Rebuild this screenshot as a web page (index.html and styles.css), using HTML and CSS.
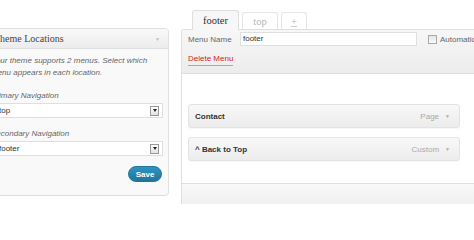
FILE: index.html
```html
<!DOCTYPE html>
<html lang="en">
<head>
<meta charset="utf-8">
<title>Menus</title>
<link rel="stylesheet" href="styles.css">
</head>
<body>
<div class="page">
  <aside class="sidebar">
    <div class="box-head">
      <h3>Theme Locations</h3>
      <span class="toggle">&#9660;</span>
    </div>
    <div class="box-body">
      <p class="desc">Your theme supports 2 menus. Select which menu appears in each location.</p>
      <label class="loc-label">Primary Navigation</label>
      <div class="select"><span>top</span><span class="sel-arrow"><i></i></span></div>
      <label class="loc-label">Secondary Navigation</label>
      <div class="select"><span>footer</span><span class="sel-arrow"><i></i></span></div>
      <div class="actions"><button class="button-primary">Save</button></div>
    </div>
  </aside>

  <main class="main">
    <div class="tabs">
      <span class="tab active">footer</span>
      <span class="tab inactive tab-top">top</span>
      <span class="tab inactive tab-add"><u>+</u></span>
    </div>
    <div class="menu-panel">
      <div class="panel-head">
        <div class="name-row">
          <span class="name-label">Menu Name</span>
          <span class="name-input">footer</span>
          <span class="checkbox"></span>
          <span class="auto-label">Automatically add new top-level pages</span>
        </div>
        <a class="delete-link">Delete Menu</a>
      </div>
      <div class="panel-body">
        <div class="item">
          <span class="item-title">Contact</span>
          <span class="item-type">Page</span>
          <span class="item-arrow">&#9660;</span>
        </div>
        <div class="item">
          <span class="item-title">^ Back to Top</span>
          <span class="item-type">Custom</span>
          <span class="item-arrow">&#9660;</span>
        </div>
      </div>
      <div class="panel-foot"></div>
    </div>
  </main>
</div>
</body>
</html>
```

FILE: styles.css
```css
* { box-sizing: border-box; }
html, body { margin: 0; padding: 0; }
body {
  width: 474px;
  height: 204px;
  overflow: hidden;
  background: #fff;
  font-family: "Liberation Sans", Arial, sans-serif;
  font-size: 8px;
  color: #333;
}
.page { display: flex; align-items: flex-start; }

/* Sidebar box */
.sidebar {
  flex: none;
  width: 189px;
  height: 168px;
  margin-left: -20px;
  margin-top: 28px;
  border: 1px solid #dfdfdf;
  border-radius: 4px;
  background: #f9f9f9;
}
.box-head {
  height: 20px;
  display: flex;
  align-items: center;
  justify-content: space-between;
  padding: 0 8px 0 13px;
  border-bottom: 1px solid #dfdfdf;
  border-radius: 3px 3px 0 0;
  background: linear-gradient(#f9f9f9, #ececec);
}
.box-head h3 {
  margin: 0;
  font-family: "Liberation Serif", "Times New Roman", serif;
  font-weight: normal;
  font-size: 10px;
  color: #464646;
}
.toggle { font-size: 5px; color: #bbb; }
.box-body { padding: 6px 5px 0 10px; }
.desc {
  margin: 0;
  font-style: italic;
  line-height: 12px;
  color: #666;
}
.loc-label {
  display: block;
  margin: 11px 0 1px;
  line-height: 12px;
  font-style: italic;
  color: #666;
}
.select + .loc-label { margin-top: 10px; }
.select {
  height: 15px;
  display: flex;
  align-items: center;
  justify-content: space-between;
  padding-left: 7px;
  border: 1px solid #dfdfdf;
  background: #fff;
  color: #333;
}
.sel-arrow {
  width: 9px;
  height: 10px;
  margin-right: 3px;
  border: 1px solid #999;
  background: linear-gradient(#fff, #e3e3e3);
  display: flex;
  align-items: center;
  justify-content: center;
}
.sel-arrow i {
  width: 0;
  height: 0;
  border-left: 2px solid transparent;
  border-right: 2px solid transparent;
  border-top: 3px solid #222;
}
.actions { display: flex; justify-content: flex-end; margin-top: 10px; padding-right: 1px; }
.button-primary {
  width: 34px;
  height: 16px;
  padding: 0;
  border: 1px solid #21759b;
  border-radius: 8px;
  background: linear-gradient(#2e93c4, #21759b);
  color: #fff;
  font-family: "Liberation Sans", Arial, sans-serif;
  font-weight: bold;
  font-size: 8px;
}

/* Main column */
.main { flex: none; width: 330px; margin-left: 12px; margin-top: 10px; }
.tabs {
  display: flex;
  align-items: flex-end;
  gap: 3px;
  padding-left: 11px;
  height: 20px;
  margin-bottom: -1px;
  position: relative;
  z-index: 1;
}
.tab {
  display: flex;
  align-items: center;
  justify-content: center;
  font-family: "Liberation Serif", "Times New Roman", serif;
  font-size: 10.5px;
  border: 1px solid #dfdfdf;
  border-bottom: none;
  border-radius: 3px 3px 0 0;
}
.tab.active { width: 47px; height: 20px; background: #f7f7f7; color: #333; }
.tab.inactive {
  height: 17px;
  margin-bottom: 1px;
  background: #fff;
  color: #b5b5b5;
  border-color: #e6e6e6;
}
.tab-top { width: 36px; }
.tab-add { width: 26px; }
.tab-add u { text-decoration-color: #ccc; }

.menu-panel {
  width: 330px;
  border: 1px solid #dfdfdf;
  border-right: none;
  border-radius: 3px 0 0 0;
}
.panel-head {
  height: 44px;
  padding: 2px 0 0 6px;
  border-bottom: 1px solid #dfdfdf;
  background: linear-gradient(#f7f7f7, #ececec);
  overflow: hidden;
}
.name-row { display: flex; align-items: center; height: 14px; white-space: nowrap; }
.name-row > span { flex: none; }
.name-label { width: 52px; color: #666; }
.name-input {
  width: 177px;
  height: 14px;
  line-height: 12px;
  padding-left: 2px;
  border: 1px solid #dfdfdf;
  background: #fff;
  color: #333;
}
.checkbox {
  width: 9px;
  height: 9px;
  margin-left: 11px;
  border: 1px solid #aaa;
  background: linear-gradient(#e6e6e6, #fafafa);
}
.auto-label { margin-left: 3px; color: #666; }
.delete-link {
  display: inline-block;
  margin-top: 7px;
  line-height: 12px;
  color: #d4232a;
  border-bottom: 1px solid #ee8a8a;
}
.panel-body {
  height: 109px;
  padding: 30px 0 0 6px;
  display: flex;
  flex-direction: column;
  gap: 9px;
}
.item {
  width: 272px;
  height: 24px;
  display: flex;
  align-items: center;
  padding: 0 9px 0 6px;
  border: 1px solid #e3e3e3;
  border-radius: 3px;
  background: linear-gradient(#f8f8f8, #ececec);
  box-shadow: 0 1px 1px rgba(0, 0, 0, 0.03);
}
.item-title { flex: 1; font-weight: bold; color: #333; }
.item-type { color: #aaa; }
.item-arrow { margin-left: 6px; font-size: 5px; color: #aaa; }
.panel-foot {
  height: 30px;
  border-top: 1px solid #dfdfdf;
  background: linear-gradient(#f9f9f9, #ececec);
}
```
